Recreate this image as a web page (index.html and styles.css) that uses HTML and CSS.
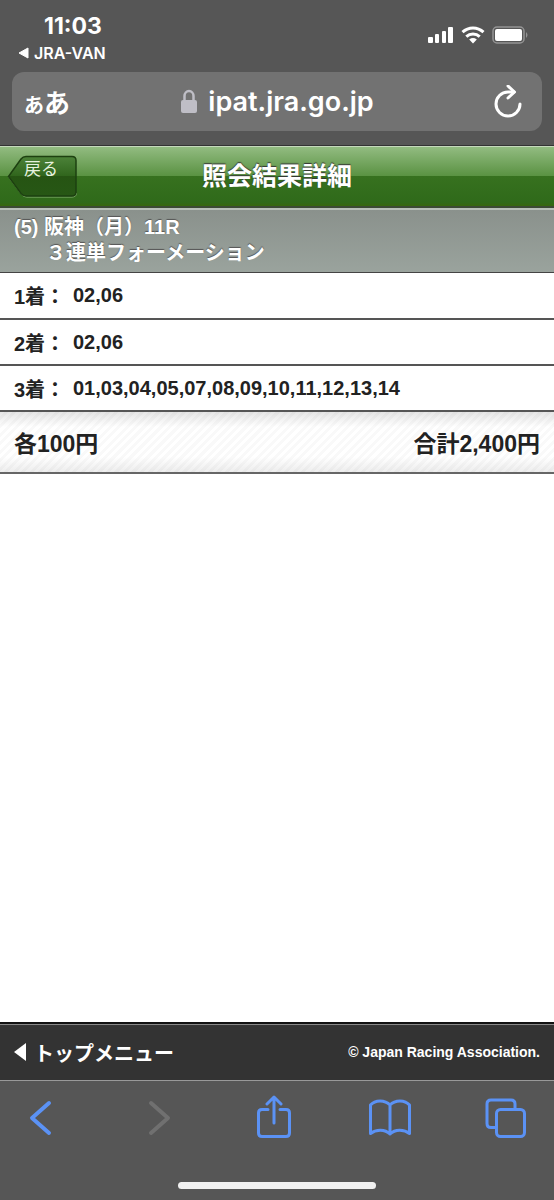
FILE: index.html
```html
<!DOCTYPE html>
<html lang="ja">
<head>
    <meta charset="UTF-8">
    <meta name="viewport" content="width=device-width, initial-scale=1.0">
    <title>照会結果詳細</title>
    <link rel="stylesheet" href="styles.css">
</head>
<body>

    <!-- Phone status bar and address bar -->
    <div class="browser-top">
        <div class="status-bar">
            <div class="status-left">
                <span class="clock">11:03</span>
                <a href="#" class="back-app">
                    <svg width="11" height="12" viewBox="0 0 11 12" aria-hidden="true"><path d="M10 1v10L1 6z" fill="#fff" stroke="#fff" stroke-linejoin="round"/></svg>
                    JRA-VAN
                </a>
            </div>
            <div class="status-icons">
                <svg width="26" height="18" viewBox="0 0 26 18" aria-label="Signal">
                    <g fill="#fff">
                        <rect x="0" y="11" width="5" height="6" rx="1"/>
                        <rect x="7" y="8" width="4" height="9" rx="1"/>
                        <rect x="14" y="5" width="4" height="12" rx="1"/>
                        <rect x="20" y="1" width="5" height="16" rx="1"/>
                    </g>
                </svg>
                <svg width="24" height="18" viewBox="0 0 24 18" aria-label="Wi-Fi">
                    <g fill="none" stroke="#fff" stroke-width="3">
                        <path d="M1.5 6.2C7.5 0.6 16.5 0.6 22.5 6.2"/>
                        <path d="M5.3 10.6c3.8-3.5 9.6-3.5 13.4 0"/>
                    </g>
                    <path d="M12 17.5l-3.8-4q3.8-2.800 7.6 0z" fill="#fff"/>
                </svg>
                <svg width="36" height="18" viewBox="0 0 36 18" aria-label="Battery">
                    <rect x="1" y="1" width="31" height="16" rx="4" fill="none" stroke="#949494" stroke-width="1.5"/>
                    <rect x="3" y="3" width="27" height="12" rx="2" fill="#fff"/>
                    <path d="M34 6q3 3 0 6z" fill="#949494"/>
                </svg>
            </div>
        </div>
        <div class="address-bar">
            <button type="button" class="text-size" aria-label="表示設定"><span>あ</span>あ</button>
            <button type="button" class="url">
                <svg width="18" height="26" viewBox="0 0 18 26" aria-hidden="true">
                    <rect x="1" y="11" width="16" height="13" rx="2" fill="#bfbec6"/>
                    <path d="M4.5 12V7a4.5 5 0 0 1 9 0v5" fill="none" stroke="#bfbec6" stroke-width="2.5"/>
                </svg>
                ipat.jra.go.jp
            </button>
            <button type="button" class="reload" aria-label="再読み込み">
                <svg width="28" height="34" viewBox="0 0 28 34" aria-hidden="true">
                    <g fill="none" stroke="#fff" stroke-width="3" stroke-linecap="round" stroke-linejoin="round">
                        <path d="M26 19a12 12 0 1 1-12-12h6"/>
                        <path d="M14 1l6.5 6-6.5 6"/>
                    </g>
                </svg>
            </button>
        </div>
    </div>

    <header class="title-bar">
        <a href="#" class="back-button">
            <svg width="72" height="46" viewBox="0 0 72 46" aria-hidden="true">
                <defs>
                    <linearGradient id="back-fill" x1="0" y1="0" x2="0" y2="1">
                        <stop offset="0" stop-color="#4c8239"/>
                        <stop offset="0.5" stop-color="#30651c"/>
                        <stop offset="0.5" stop-color="#265413"/>
                        <stop offset="1" stop-color="#275715"/>
                    </linearGradient>
                </defs>
                <path d="M1.500 24l13 17.500q2 2.500 5 2.500h45.500q4.500 0 4.500-4" fill="none" stroke="#86b272"/>
                <path d="M1.5 23.500L14 6q2-2.500 5-2.500h46q4 0 4 4V39q0 4-4 4H19q-3 0-5-2.500z" fill="url(#back-fill)" stroke="#1d4010" stroke-width="1.5"/>
            </svg>
            <span>戻る</span>
        </a>
        <h1>照会結果詳細</h1>
    </header>

    <main>
        <!-- Race and bet type -->
        <h2 class="race">
            (5) 阪神（月）11R
            <span>３連単フォーメーション</span>
        </h2>

        <!-- Selected horses -->
        <table class="picks">
            <tr>
                <th scope="row">1着：</th>
                <td>02,06</td>
            </tr>
            <tr>
                <th scope="row">2着：</th>
                <td>02,06</td>
            </tr>
            <tr>
                <th scope="row">3着：</th>
                <td>01,03,04,05,07,08,09,10,11,12,13,14</td>
            </tr>
        </table>

        <div class="total">
            <span>各100円</span>
            <span>合計2,400円</span>
        </div>
    </main>

    <footer class="page-footer">
        <a href="#">
            <svg width="12" height="20" viewBox="0 0 12 20" aria-hidden="true"><path d="M12 1v18L0 10z" fill="#fff"/></svg>
            トップメニュー
        </a>
        <small>© Japan Racing Association.</small>
    </footer>

    <!-- Browser toolbar -->
    <nav class="toolbar">
        <div class="toolbar-buttons">
            <button type="button" aria-label="戻る">
                <svg width="44" height="46" viewBox="0 0 44 46"><path d="M30 8L13 23l17 15" stroke-width="4"/></svg>
            </button>
            <button type="button" aria-label="進む" disabled>
                <svg width="44" height="46" viewBox="0 0 44 46"><path d="M16 8l17 15-17 15" stroke-width="4"/></svg>
            </button>
            <button type="button" aria-label="共有">
                <svg width="44" height="46" viewBox="0 0 44 46"><path d="M16 14.500H10q-3.500 0-3.500 3.500v20q0 3.500 3.500 3.500h24q3.500 0 3.500-3.500V18q0-3.500-3.500-3.500h-6M22 28V2.500M15 9l7-7 7 7"/></svg>
            </button>
            <button type="button" aria-label="ブックマーク">
                <svg width="44" height="46" viewBox="0 0 44 46"><path d="M22 10C17 4.500 7 4.500 2.500 10v28.500C8 34 17 34 22 39c5-5 14-5 19.500-.5V10C37 4.500 27 4.500 22 10zM22 10v29"/></svg>
            </button>
            <button type="button" aria-label="タブ">
                <svg width="44" height="46" viewBox="0 0 44 46"><rect x="12.500" y="14.500" width="28" height="27" rx="4"/><path d="M12 32.500H7q-4 0-4-4V9q0-4 4-4h20q4 0 4 4v5"/></svg>
            </button>
        </div>
        <div class="home-indicator"></div>
    </nav>

</body>
</html>
```
FILE: styles.css
```css
* {
    box-sizing: border-box;
}

body {
    margin: 0;
    min-height: 100vh;
    display: flex;
    flex-direction: column;
    background: #fff;
    color: #222;
    font-family: "Liberation Sans", "Noto Sans CJK JP", sans-serif;
    font-weight: bold;
}

a {
    color: inherit;
    text-decoration: none;
}

button {
    padding: 0;
    border: 0;
    background: none;
    color: inherit;
    font: inherit;
}

svg {
    display: block;
    flex: none;
}

/* Status bar and address bar */
.browser-top {
    padding: 12px 12px 14px;
    background: #565656;
    color: #fff;
    font-family: Inter, "Noto Sans CJK JP", sans-serif;
}

.status-bar {
    display: flex;
    justify-content: space-between;
    height: 60px;
    padding: 0 14px 0 6px;
}

.status-left {
    display: flex;
    flex-direction: column;
}

.clock {
    padding-left: 26px;
    font-size: 23px;
    line-height: 28px;
}

.back-app {
    display: flex;
    align-items: center;
    gap: 5px;
    font-size: 16px;
    font-weight: 600;
    line-height: 26px;
}

.status-icons {
    display: flex;
    gap: 7px;
    padding-top: 14px;
}

.address-bar {
    display: grid;
    grid-template-columns: 60px 1fr 52px;
    align-items: center;
    height: 59px;
    padding: 0 20px 0 12px;
    border-radius: 12px;
    background: #727272;
}

.text-size {
    font-size: 26px;
    font-weight: 600;
    text-align: left;
}

.text-size span {
    font-size: 20px;
}

.url {
    display: flex;
    align-items: center;
    justify-content: center;
    gap: 10px;
    font-size: 27px;
    font-weight: 600;
}

.reload {
    justify-self: end;
}

/* Green title bar */
.title-bar {
    display: grid;
    grid-template-columns: 70px 1fr 70px;
    align-items: center;
    height: 63px;
    padding: 0 7px;
    border-top: 1px solid #333;
    border-bottom: 2px solid #3b4b35;
    background: linear-gradient(#94bd83, #5a9242 50%, #37711f 50%, #2f6a1a 94%, #37670e);
    box-shadow: inset 0 1px #c5d9bc;
    color: #fff;
}

.title-bar h1 {
    margin: 0;
    font-size: 25px;
    line-height: 36px;
    text-align: center;
    text-shadow: 0 -1px 1px #333;
}

.back-button {
    display: grid;
    font-size: 17px;
    font-weight: normal;
    line-height: 34px;
}

.back-button svg,
.back-button span {
    grid-area: 1 / 1;
}

.back-button span {
    padding-left: 17px;
    color: #e6f2df;
}

/* Bet details */
main {
    flex: 1;
}

.race {
    margin: 0;
    padding: 4px 14px 6px;
    border-top: 2px solid #b7c0b9;
    border-bottom: 1px solid #444;
    background: linear-gradient(#8a918c, #9aa39d);
    color: #fff;
    font-size: 20px;
    line-height: 26px;
    text-shadow: 0 -1px 1px #555;
}

.race span {
    display: block;
    padding-left: 32px;
}

.picks {
    width: 100%;
    border-collapse: collapse;
    font-size: 20px;
}

.picks tr {
    height: 46px;
    border-bottom: 2px solid #555;
}

.picks th {
    width: 73px;
    padding: 0 0 0 14px;
    text-align: left;
    white-space: nowrap;
}

.picks td {
    padding: 0;
}

.total {
    display: flex;
    align-items: center;
    justify-content: space-between;
    height: 62px;
    padding: 0 14px;
    border-bottom: 2px solid #666;
    background:
        linear-gradient(rgba(0, 0, 0, 0.1), transparent 25%, transparent 75%, rgba(0, 0, 0, 0.07)),
        repeating-linear-gradient(135deg, #fff 0 3px, #f9f9f9 3px 6px);
    font-size: 23px;
}

/* Page footer */
.page-footer {
    display: flex;
    align-items: center;
    justify-content: space-between;
    height: 59px;
    padding: 0 14px;
    border-top: 2px solid #111;
    border-bottom: 1px solid #999;
    background: #333;
    box-shadow: inset 0 1px #888;
    color: #fff;
    font-size: 20px;
}

.page-footer a {
    display: flex;
    align-items: center;
    gap: 8px;
}

.page-footer small {
    font-size: 14px;
}

/* Browser toolbar */
.toolbar {
    padding: 14px 0 11px;
    background: #565656;
}

.toolbar-buttons {
    display: flex;
    justify-content: space-between;
    height: 87px;
    padding: 0 26px 0 19px;
}

.toolbar-buttons button {
    align-self: flex-start;
    color: #5b92f5;
}

.toolbar-buttons button:disabled {
    color: #707070;
}

.toolbar-buttons svg {
    fill: none;
    stroke: currentColor;
    stroke-width: 3;
    stroke-linecap: round;
    stroke-linejoin: round;
}

.home-indicator {
    width: 198px;
    height: 7px;
    margin: 0 auto;
    border-radius: 4px;
    background: #f0f0f0;
}
```
